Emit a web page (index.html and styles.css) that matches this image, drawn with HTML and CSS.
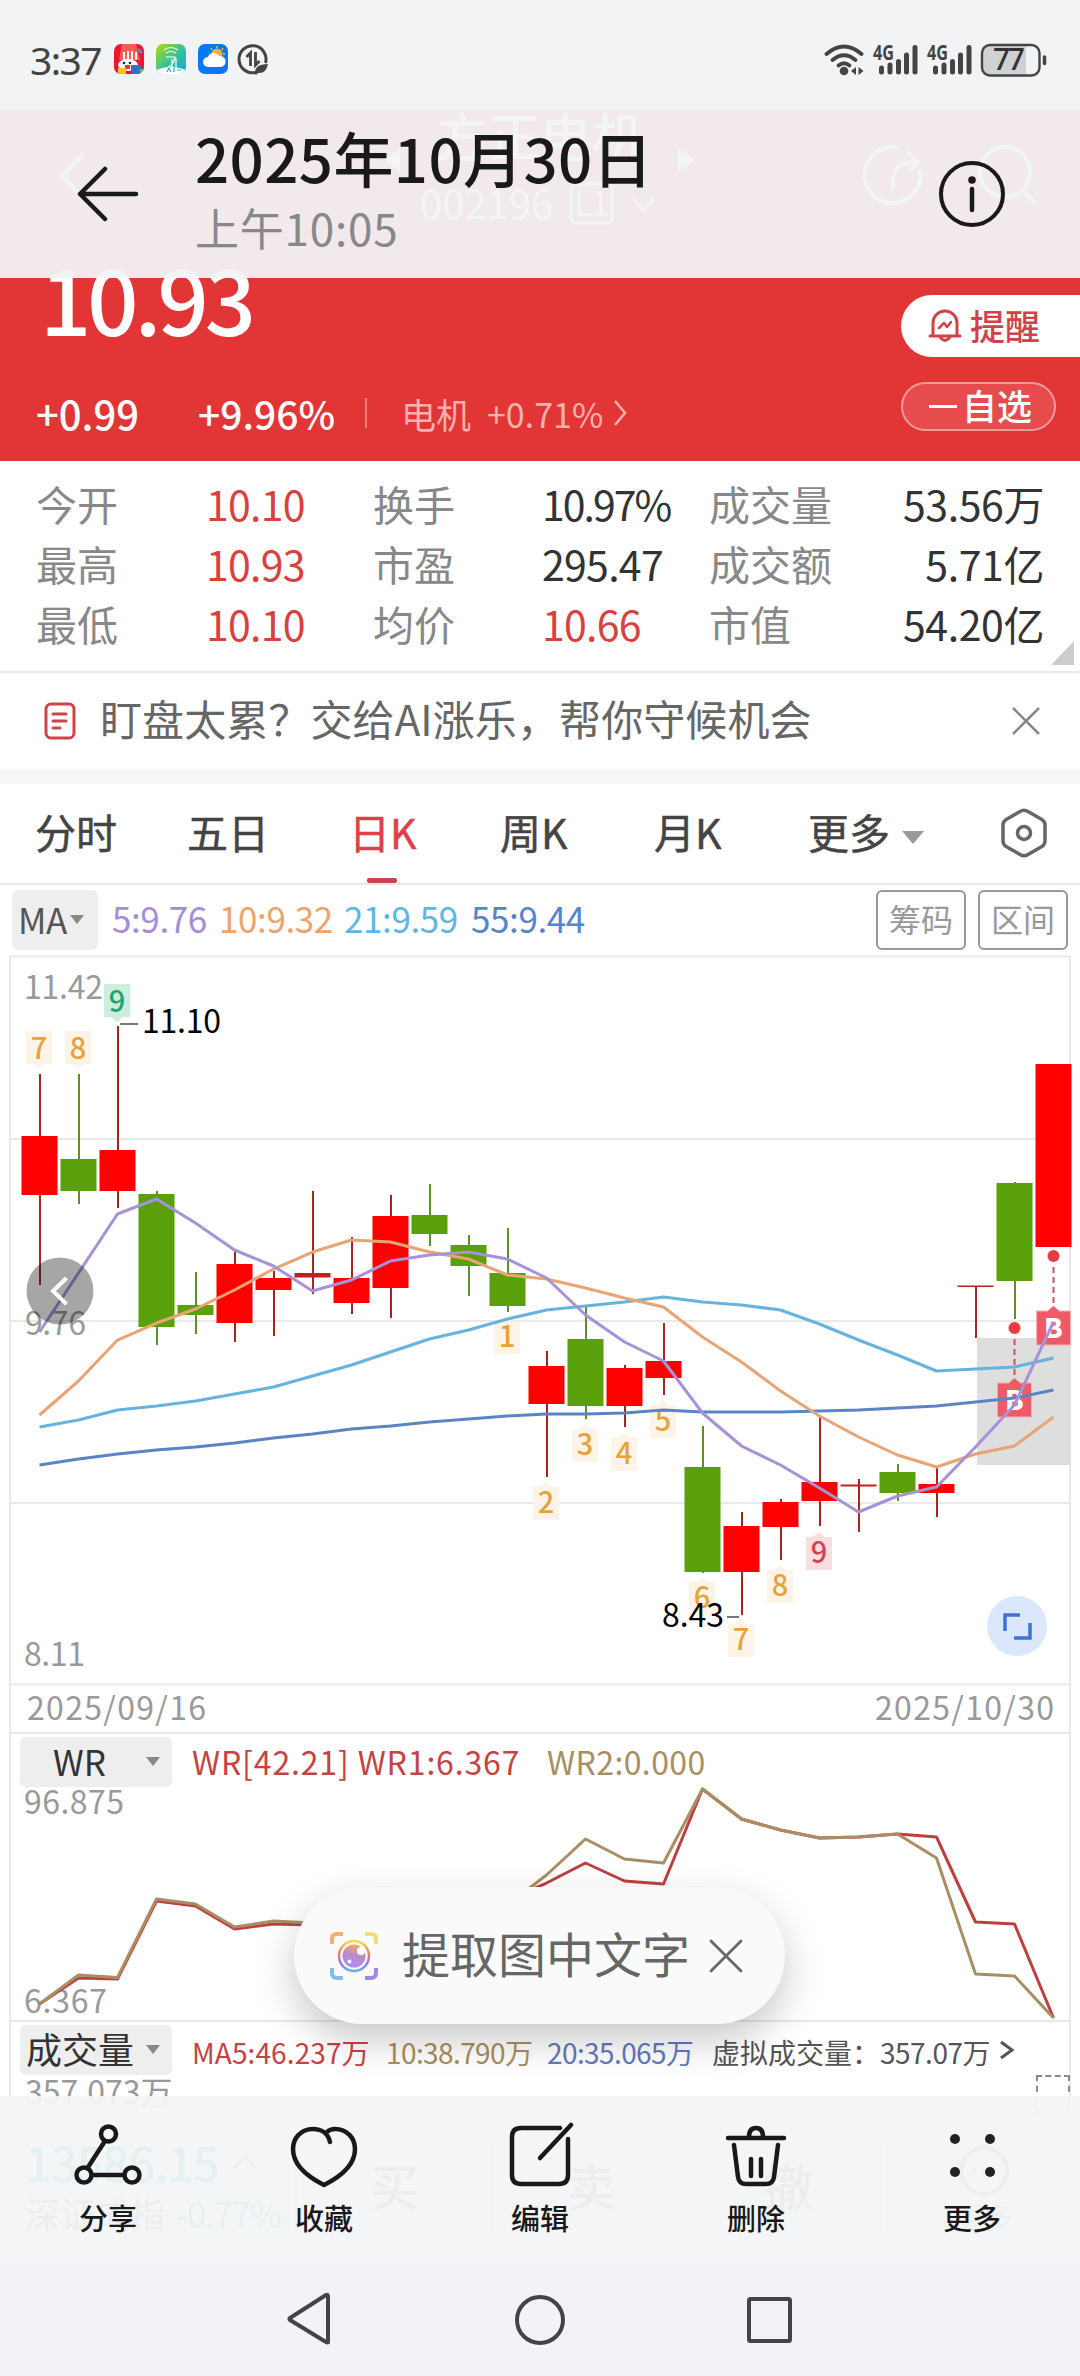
FILE: index.html
```html
<!DOCTYPE html>
<html lang="zh-CN">
<head>
<meta charset="utf-8">
<title>方正电机 002196</title>
<link rel="stylesheet" href="styles.css">
</head>
<body>
<div class="phone">
  <main class="app">
    <section class="hero">
      <div class="hero-nav">
        <svg class="hero-nav-art" width="1080" height="168" viewBox="0 110 1080 168" fill="none" stroke="#fff" stroke-width="5">
          <path d="M84 153 62 176 84 199"/>
          <path d="M400 148v24l-15-12zM678 148v24l18-12z" fill="#fff" stroke="none"/>
          <rect x="571" y="184" width="41" height="39" rx="5" stroke-width="3"/>
          <path d="m633 199 10 11 11-11" stroke-width="3"/>
          <path d="M899 148a28 28 0 1 0 21 22M893 190v-12q2-16 24-16M907 152l11 10-8 9" stroke-width="4"/>
          <circle cx="1005" cy="172" r="25" stroke-width="4"/><path d="m1023 190 12 14" stroke-width="4"/>
        </svg>
        <div class="stock-name">方正电机</div>
        <div class="stock-code"><span>002196</span><b>L1</b></div>
      </div>
      <div class="price">10.93</div>
      <div class="changes">
        <span class="chg">+0.99</span><span class="pct">+9.96%</span><i class="bar"></i>
        <span class="sector">电机</span><span class="sector-pct">+0.71%</span>
        <svg width="16" height="28" viewBox="0 0 16 28" fill="none" stroke="#f9b0ae" stroke-width="2.5"><path d="m2 2 10 12L2 26"/></svg>
      </div>
      <div class="hero-actions">
        <div class="remind">
          <svg width="34" height="36" viewBox="0 0 34 36" fill="none" stroke="#d0424a" stroke-width="3" stroke-linecap="round" stroke-linejoin="round"><path d="M5 28V15a12 12 0 0 1 24 0v13M2 28h30M12 29q5 7 10 0"/><path d="m11 20 5-5 3 4 4-5" stroke-width="2.5"/></svg>
          <span>提醒</span>
        </div>
        <div class="watch"><i></i><span>自选</span></div>
      </div>
    </section>

    <section class="stats">
      <span>今开</span><b class="up">10.10</b><span>换手</span><b class="tight">10.97%</b><span>成交量</span><b class="end">53.56万</b>
      <span>最高</span><b class="up">10.93</b><span>市盈</span><b>295.47</b><span>成交额</span><b class="end">5.71亿</b>
      <span>最低</span><b class="up">10.10</b><span>均价</span><b class="up">10.66</b><span>市值</span><b class="end">54.20亿</b>
      <i class="corner"></i>
    </section>

    <section class="notice">
      <svg width="32" height="38" viewBox="0 0 32 38" fill="none" stroke="#d0424a" stroke-width="3" stroke-linecap="round"><rect x="2" y="2" width="28" height="34" rx="5"/><path d="M9 12h13M9 19h13M9 26h7"/></svg>
      <p>盯盘太累？交给AI涨乐，帮你守候机会</p>
      <svg width="28" height="28" viewBox="0 0 28 28" stroke="#888" stroke-width="2.5"><path d="m1 1 26 26M27 1 1 27"/></svg>
    </section>

    <nav class="tabs">
      <span>分时</span><span>五日</span><span class="on">日K</span><span>周K</span><span>月K</span><span>更多<i class="caret"></i></span>
      <svg width="46" height="50" viewBox="0 0 46 50" fill="none" stroke="#666" stroke-width="3.5" stroke-linejoin="round"><path d="M19 3.500Q23 1 27 3.500L40 11Q44 13 44 17V33Q44 37 40 39L27 46.500Q23 49 19 46.500L6 39Q2 37 2 33V17Q2 13 6 11Z"/><circle cx="23" cy="25" r="6.500"/></svg>
    </nav>

    <section class="ma-row">
      <div class="pick ma-pick">MA<i class="caret"></i></div>
      <span class="ma5">5:9.76</span><span class="ma10">10:9.32</span><span class="ma21">21:9.59</span><span class="ma55">55:9.44</span>
      <button>筹码</button><button>区间</button>
    </section>

    <svg class="kline" id="kline" width="1080" height="777" viewBox="0 955 1080 777"></svg>

    <section class="panel wr">
      <div class="panel-head">
        <div class="pick">WR<i class="caret"></i></div>
        <span class="red">WR[42.21] WR1:6.367</span><span class="tan">WR2:0.000</span>
      </div>
      <svg id="wr" width="1080" height="233" viewBox="0 1787 1080 233"></svg>
    </section>

    <section class="panel vol">
      <div class="panel-head">
        <div class="pick">成交量<i class="caret"></i></div>
        <span class="red v1">MA5:46.237万</span><span class="tan v2">10:38.790万</span><span class="blue v3">20:35.065万</span><span class="v4">虚拟成交量：</span><span class="v5">357.07万</span>
        <svg width="16" height="20" viewBox="0 0 16 20" fill="none" stroke="#555" stroke-width="3"><path d="m2 2 11 8-11 8"/></svg>
      </div>
      <div class="vol-body"><span>357.073万</span><i></i></div>
    </section>

    <footer class="trade">
      <div class="index">
        <div class="index-value">13586.15<svg width="26" height="16" viewBox="0 0 26 16" fill="none" stroke="#888" stroke-width="3"><path d="m2 14 11-11 11 11"/></svg></div>
        <div class="index-name">深证成指<em>-0.77%</em></div>
      </div>
      <div class="side">买</div><div class="side">卖</div><div class="side">撤</div>
      <div class="more-ghost">
        <svg width="52" height="52" viewBox="0 0 52 52" fill="none" stroke="#888" stroke-width="4"><circle cx="26" cy="26" r="23"/><path d="M14 26h4M24 26h4M34 26h4"/></svg>
        更多
      </div>
    </footer>
  </main>

  <div class="status">
    <span class="clock">3:37</span>
    <svg class="status-apps" width="156" height="32" viewBox="0 0 156 32">
      <defs>
        <linearGradient id="g1" x1="0" y1="0" x2="1" y2="1"><stop offset=".1" stop-color="#9bd32a"/><stop offset=".55" stop-color="#2dc3a0"/><stop offset="1" stop-color="#1ba7d8"/></linearGradient>
        <clipPath id="c1"><rect y="1" width="30" height="30" rx="7"/></clipPath>
        <clipPath id="c2"><rect x="42" y="1" width="30" height="30" rx="7"/></clipPath>
      </defs>
      <g clip-path="url(#c1)"><path fill="#ec1630" d="M0 1h30v30H0z"/><path fill="#ff5a52" d="M8 1h14l4 16H5z"/><path d="M10 9v8M14 8v9M18 8v9M22 9v8" stroke="#fff" stroke-width="2"/><ellipse cx="14" cy="22" rx="10" ry="6" fill="#fff"/><circle cx="10" cy="20" r="1.300" fill="#222"/><circle cx="16" cy="20" r="1.300" fill="#222"/><path fill="#e3362f" d="M11 22h5v4h-5z"/><path fill="#ffc02c" d="M4 25h8v6H4z"/><path fill="#3270c8" d="M17 22h10v9H17z"/><path fill="#5bc36d" d="M26 26h4v5h-4z"/><path d="m24 6 4 4" stroke="#5d7fd8" stroke-width="3"/></g>
      <g clip-path="url(#c2)"><path fill="url(#g1)" d="M42 1h30v30H42z"/><ellipse cx="57" cy="30" rx="16" ry="6" fill="#fff"/><path d="M50 7q7-5 14 0M52 10q5-3 10 0M52 14h9q-1 8-7 10M58 16v8M62 15v9" fill="none" stroke="#fff" stroke-width="1.200"/><path d="m53 29 2-4 2 4M60 25v4M63 27h4" fill="none" stroke="#25a9c6" stroke-width="1.200"/></g>
      <rect x="84" y="1" width="30" height="30" rx="7" fill="#0878f3"/><circle cx="103" cy="11" r="5.500" fill="#ffb21e"/><path d="M103 3v2M97 5l1 2M109 5l-1 2M111 11h-2M109 17l-1-1" stroke="#ffb21e" stroke-width="1.500"/><path fill="#fff" d="M94 24a5 5 0 0 1 0-10 6 6 0 0 1 11-1 5.500 5.500 0 0 1 2 11z"/>
      <g fill="none" stroke="#444" stroke-width="3"><path d="M151.500 20A13.500 13.500 0 1 0 141 29.500"/><path d="M136.500 23V10l-4 4M141.500 9v13l4-4" stroke-width="2.800"/></g><path d="M141 31q-1-10 13-10-2 10-10 9l-2 2z" fill="#444"/>
    </svg>
    <svg class="status-net" width="240" height="36" viewBox="820 40 240 36" fill="none" stroke="#444" stroke-linecap="round">
      <g stroke-width="3.800"><path d="M825.500 53Q843 38 860.500 53"/><path d="M831.500 59Q843 49.500 854.500 59"/><path d="M837.500 64.500Q843 60 848.500 64.500"/></g>
      <circle cx="843" cy="70" r="4.300" fill="#444" stroke="none"/><path fill="#444" stroke="none" d="M855 66v8l-5-4zM857.500 66v8l5-4z"/>
      <g stroke-width="5"><path d="M880.500 67v4M889 64v7M897.500 60.500V71M905.500 54v17M914 46.500V71"/><path d="M934.500 67v4M943 64v7M951.500 60.500V71M959.500 54v17M968 46.500V71"/></g>
      <g class="g4"><text x="872" y="58.500" textLength="21" lengthAdjust="spacingAndGlyphs">4G</text><text x="926" y="58.500" textLength="21" lengthAdjust="spacingAndGlyphs">4G</text></g>
      <path d="M990 45h35v29h-35q-8 0-8-8V53q0-8 8-8z" fill="#cfd1d3" stroke="none"/>
      <rect x="981" y="44" width="57.500" height="30.500" rx="8" stroke-width="2.400"/><path d="M1043.500 56v6.500" stroke-width="3.500"/>
      <text class="batt" x="992" y="69" textLength="32">77</text>
    </svg>
  </div>

  <header class="topbar">
    <svg width="62" height="56" viewBox="0 0 62 56" fill="none" stroke="#191919" stroke-width="4.500" stroke-linecap="round" stroke-linejoin="round"><path d="M59 28H3M28 3 3 28l25 25"/></svg>
    <div class="when"><h1>2025年10月30日</h1><p>上午10:05</p></div>
    <svg width="68" height="68" viewBox="0 0 68 68" fill="none" stroke="#191919" stroke-width="4"><circle cx="34" cy="34" r="31"/><path d="M34 29v21" stroke-width="4.500" stroke-linecap="round"/><circle cx="34" cy="20" r="3.800" fill="#191919" stroke="none"/></svg>
  </header>

  <div class="extract">
    <svg width="50" height="50" viewBox="0 0 50 50" fill="none">
      <defs>
        <linearGradient id="lens" x1="0" y1="0" x2="0" y2="1"><stop offset="0" stop-color="#f9dc4e"/><stop offset=".4" stop-color="#ee7f66"/><stop offset=".75" stop-color="#a078ea"/><stop offset="1" stop-color="#62b4ee"/></linearGradient>
        <linearGradient id="ball" x1=".7" y1="0" x2=".4" y2="1"><stop offset="0" stop-color="#f6b055"/><stop offset=".5" stop-color="#b88ad0"/><stop offset="1" stop-color="#b08cf2"/></linearGradient>
      </defs>
      <g stroke-width="4"><path d="M3 13V8q0-5 5-5h6" stroke="#f3b071"/><path d="M36 3h6q5 0 5 5v5" stroke="#f5d978"/><path d="M3 37v5q0 5 5 5h6" stroke="#84bdec"/><path d="M36 47h6q5 0 5-5v-5" stroke="#a287e4"/></g>
      <circle cx="25" cy="25" r="15" stroke="url(#lens)" stroke-width="2.500"/><circle cx="25" cy="25" r="11.500" fill="url(#ball)"/><circle cx="32" cy="20" r="4" fill="#fff"/><circle cx="20.500" cy="30.500" r="2" fill="#fff"/>
    </svg>
    <span>提取图中文字</span>
    <svg width="34" height="34" viewBox="0 0 34 34" stroke="#666" stroke-width="2.800" stroke-linecap="round"><path d="m2 2 30 30M32 2 2 32"/></svg>
  </div>

  <div class="toolbar">
    <div class="tool"><svg viewBox="0 0 72 72"><circle cx="36.500" cy="14" r="7.500"/><circle cx="12" cy="55" r="7.500"/><circle cx="60" cy="55" r="7.500"/><path d="M33 21 15.500 48M20 55h32"/></svg>分享</div>
    <div class="tool"><svg viewBox="0 0 72 72"><path d="M42 22C40 13 33 9 25 9 13 9 5 18 5 29c0 16 15 28 31 36C52 57 67 45 67 29c0-11-8-20-20-20-3 0-6 1-8 3"/></svg>收藏</div>
    <div class="tool"><svg viewBox="0 0 72 72"><path d="M56 8H17Q8 8 8 17v38q0 9 9 9h38q9 0 9-9V19M36 38 67 5"/></svg>编辑</div>
    <div class="tool"><svg viewBox="0 0 72 72"><path d="M8 18h56M29 17q0-9 7-9t7 9M14 25l4 32q1 7 8 7h20q7 0 8-7l4-32M31 39v17M41 39v17"/></svg>删除</div>
    <div class="tool"><svg class="dots" viewBox="0 0 72 72"><circle cx="19" cy="19" r="5"/><circle cx="54" cy="19" r="5"/><circle cx="19" cy="52" r="5"/><circle cx="54" cy="52" r="5"/></svg>更多</div>
  </div>

  <div class="sysnav">
    <svg width="510" height="56" viewBox="285 2292 510 56" fill="none" stroke="#444" stroke-width="4" stroke-linejoin="round"><path d="M328 2297v45q0 1-2 0l-36-22q-1-1 0-2l36-23q2-1 2 2z"/><circle cx="540" cy="2320" r="23"/><rect x="749" y="2299" width="41" height="42" rx="1.500"/></svg>
  </div>
</div>
<script src="charts.js"></script>
</body>
</html>
```
FILE: styles.css
```css
* { box-sizing: border-box; margin: 0; padding: 0; }
body { background: #fff; font-family: "Noto Sans CJK SC", "Noto Sans", sans-serif; color: #333; }
svg { display: block; flex: none; }
i, em { font-style: normal; }
.phone { position: relative; width: 1080px; height: 2376px; overflow: hidden; }
.app { height: 2264px; overflow: hidden; background: #fff; }

.hero { position: relative; height: 461px; background: #e23536; color: #fff; padding-top: 110px; }
.hero-nav { position: relative; height: 150px; text-align: center; }
.hero-nav-art { position: absolute; left: 0; top: 0; }
.stock-name { font-size: 52px; line-height: 60px; font-weight: 500; margin-top: -5px; }
.stock-code { display: flex; padding-left: 420px; gap: 21px; font-size: 40px; line-height: 60px; margin-top: 7px; }
.stock-code b { font-weight: 400; font-size: 34px; letter-spacing: -2px; }
.price { height: 110px; padding-left: 40px; font-size: 90px; line-height: 110px; font-weight: 500; letter-spacing: -4px; margin-top: -18px; }
.hero-nav { margin-bottom: 5px; height: 145px; padding-top: .1px; }
.changes { display: flex; align-items: center; height: 60px; margin-top: 31px; padding-left: 36px; font-weight: 500; }
.chg { width: 162px; font-size: 40px; }
.pct { width: 167px; font-size: 39px; }
.bar { width: 2px; height: 30px; background: #f07f7e; margin-right: 34px; }
.sector { color: #f9b0ae; font-size: 35px; font-weight: 400; width: 86px; }
.sector-pct { color: #f9b0ae; font-size: 34px; font-weight: 400; width: 126px; }
.hero-actions { position: absolute; left: 901px; top: 295px; width: 179px; }
.remind { display: flex; align-items: center; gap: 8px; height: 62px; padding-left: 27px; background: #fff; border-radius: 31px 0 0 31px; color: #d0424a; font-size: 35px; font-weight: 500; }
.remind span { padding-bottom: 4px; }
.watch { display: flex; align-items: center; gap: 5px; width: 155px; height: 49px; margin-top: 25px; padding-left: 26px; border: 2px solid #f29b9a; border-radius: 25px; background: #e64c4d; font-size: 35px; font-weight: 500; line-height: 40px; }
.watch span { padding-bottom: 4px; }
.watch i { width: 28px; height: 3px; background: #fff; }

.stats { position: relative; display: grid; grid-template-columns: 170px 167px 169px 167px 166px 169px; grid-template-rows: repeat(3, 60px); align-content: start; padding: 12px 0 0 36px; height: 210px; font-size: 41px; line-height: 60px; color: #888; }
.stats b { font-weight: 400; color: #333; white-space: nowrap; letter-spacing: -.7px; }
.stats b.up { color: #d8413e; }
.stats b.tight { letter-spacing: -2px; }
.stats .end { text-align: right; letter-spacing: -.4px; }
.corner { position: absolute; right: 6px; top: 180px; border-left: 23px solid transparent; border-bottom: 24px solid #ccc; }

.notice { display: flex; align-items: center; height: 113px; padding: 0 40px 15px 44px; border-top: 2px solid #ebebeb; background: linear-gradient(#fff 96px, #f7f7f7 96px); }
.notice p { flex: 1; padding: 0 0 6px 24px; font-size: 42px; line-height: 60px; color: #666; letter-spacing: .1px; white-space: nowrap; }

.tabs { display: grid; grid-template-columns: 152px 162px 151px 154px 154px 193px 46px; align-items: center; height: 101px; padding-left: 35px; padding-bottom: 2px; border-bottom: 2px solid #e8e8e8; font-size: 41px; line-height: 60px; color: #444; -webkit-text-stroke: .5px; }
.tabs span { position: relative; top: -2px; }
.tabs .on { color: #de3f48; }
.tabs .on::after { content: ""; position: absolute; left: 18px; top: 77px; width: 30px; height: 5px; border-radius: 2px; background: #c4474f; }
.caret { display: inline-block; border: 7px solid transparent; border-top: 9px solid #888; border-bottom: 0; vertical-align: middle; }
.tabs .caret { border-width: 13px 11px 0; border-top-color: #999; margin-left: 12px; }

.ma-row { display: flex; align-items: center; height: 70px; padding: 0 12px; font-size: 35px; letter-spacing: -.4px; white-space: nowrap; }
.ma-row > span { padding-bottom: 5px; }
.pick { display: flex; align-items: center; background: #eee; border-radius: 6px; color: #333; }
.ma-pick { width: 86px; height: 60px; padding: 0 0 4px 6px; margin-right: 14px; color: #555; letter-spacing: -.5px; }
.ma-pick .caret { margin: 4px 0 0 3px; }
.ma5 { color: #a68cd8; width: 107px; }
.ma10 { color: #eba46a; width: 125px; }
.ma21 { color: #5fb6e3; width: 127px; }
.ma55 { color: #5585cc; flex: 1; }
.ma-row button { width: 90px; height: 60px; margin-left: 12px; padding-bottom: 4px; border: 2px solid #999; border-radius: 6px; background: #fff; color: #999; font: 32px "Noto Sans CJK SC", sans-serif; }

.kline text, .wr text { fill: #999; font-size: 32px; }
.kline .ink { fill: #000; }
.kline .tag { font-size: 29px; text-anchor: middle; font-weight: 500; }
.panel { padding-top: 2px; background: linear-gradient(#e8e8e8, #e8e8e8) 10px 0 / 1061px 2px no-repeat, linear-gradient(#e9e9e9, #e9e9e9) 9px 0 / 2px 100% no-repeat, linear-gradient(#e9e9e9, #e9e9e9) 1069px 0 / 2px 100% no-repeat; }
.wr { height: 288px; }
.panel-head { display: flex; align-items: center; height: 53px; padding: 3px 0 0 20px; font-size: 32px; white-space: nowrap; }
.panel-head > span { padding-bottom: 2px; }
.panel-head .pick { width: 152px; height: 50px; margin-right: 20px; padding: 0 12px 4px 33px; font-size: 35px; justify-content: space-between; }
.pick .caret { margin-top: 3px; }
.red { color: #c54343; }
.tan { color: #a88e60; }
.blue { color: #6379bb; }
.wr .red { width: 355px; letter-spacing: .85px; }
.wr .tan { letter-spacing: .4px; }
.vol { height: 93px; }
.vol .panel-head { font-size: 28px; color: #555; }
.vol .panel-head > span { padding: 3px 0 0; }
.vol .panel-head .pick { padding-left: 6px; font-size: 36px; }
.v1 { width: 194px; letter-spacing: .1px; }
.v2, .v3 { width: 161px; letter-spacing: -.6px; }
.v3 { width: 165px; }
.v4 { width: 168px; }
.v5 { width: 119px; letter-spacing: -.5px; }
.vol-body { position: relative; height: 38px; padding-left: 25px; overflow: hidden; font-size: 32px; line-height: 30px; color: #999; }
.vol-body i { position: absolute; left: 1036px; top: 0; width: 34px; height: 60px; border: 2px dashed #888; }

.trade { display: flex; height: 151px; border-top: 1px solid #ddd; background: #fff; align-items: center; }
.index { width: 295px; padding: 0 0 12px 25px; }
.index-value { display: flex; align-items: center; gap: 13px; font-size: 47px; line-height: 60px; color: #12b886; font-weight: 500; letter-spacing: -1px; }
.index-name { display: flex; gap: 11px; font-size: 35px; line-height: 42px; color: #777; }
.index-name em { color: #12b886; letter-spacing: -1.3px; }
.side { width: 197px; height: 86px; line-height: 76px; text-align: center; font-size: 50px; color: #777; border-left: 2px solid #ddd; font-weight: 500; }
.more-ghost { flex: 1; display: flex; flex-direction: column; align-items: center; border-left: 2px solid #ddd; font-size: 29px; line-height: 38px; color: #999; padding-top: 2px; }

.status { position: absolute; left: 0; top: 0; width: 1080px; height: 110px; background: #f1f3f5; display: flex; align-items: center; padding: 8px 19px 0 30px; }
.clock { width: 84px; font-size: 39px; color: #444; letter-spacing: -1.6px; font-family: "Noto Sans", "Noto Sans CJK SC", sans-serif; }
.status-net { margin-left: auto; }
.g4 text { font: bold 21px "Noto Sans", sans-serif; fill: #444; stroke: none; }
.batt { font: 500 30px "Noto Sans", sans-serif; fill: #333; stroke: none; }

.topbar { position: absolute; left: 0; top: 110px; width: 1080px; height: 168px; background: rgba(241, 243, 245, .947); display: flex; align-items: center; padding: 0 74px 0 77px; }
.when { flex: 1; padding-left: 56px; color: #191919; }
.when h1 { font-size: 60px; line-height: 74px; font-weight: 500; letter-spacing: .4px; margin-top: -8px; }
.when p { font-size: 44px; line-height: 66px; color: #888; letter-spacing: .8px; }

.extract { position: absolute; left: 294px; top: 1887px; width: 491px; height: 137px; border-radius: 69px; background: #fafafa; box-shadow: 0 16px 40px rgba(0, 0, 0, .22); display: flex; align-items: center; padding-left: 35px; color: #666; }
.extract span { font-size: 48px; width: 306px; padding: 0 0 7px 23px; margin-right: 24px; white-space: nowrap; line-height: 60px; }

.toolbar { position: absolute; left: 0; top: 2096px; width: 1080px; height: 168px; background: rgba(242, 244, 246, .94); display: flex; }
.tool { width: 216px; padding-top: 24px; text-align: center; font-size: 29px; line-height: 36px; font-weight: 500; color: #191919; }
.tool svg { width: 72px; height: 72px; margin: 0 auto 7px; fill: none; stroke: #191919; stroke-width: 4.5; stroke-linecap: round; stroke-linejoin: round; }
.tool svg.dots { fill: #222; stroke: none; }
.sysnav { height: 112px; background: #f1f3f7; padding: 28px 0 0 285px; }
```
FILE: charts.js
```js
const NS = 'http://www.w3.org/2000/svg';
const X0 = 39.5, STEP = 39;
const cx = i => X0 + STEP * i;

function add(parent, name, attrs, text) {
  const el = document.createElementNS(NS, name);
  for (const key in attrs) el.setAttribute(key, attrs[key]);
  if (text !== undefined) el.textContent = text;
  parent.appendChild(el);
  return el;
}
function line(svg, ys, color, width, from = 0) {
  const points = ys.map((y, i) => cx(i + from) + ',' + y).join(' ');
  add(svg, 'polyline', { points, fill: 'none', stroke: color, 'stroke-width': width, 'stroke-linejoin': 'round' });
}
function label(svg, x, y, width, text, cls = '') {
  add(svg, 'text', { x, y, textLength: width, class: cls }, text);
}

const k = document.getElementById('kline');
// frame and grid
add(k, 'path', { d: 'M10 956.500H1071M10 1139H1071M10 1321H1071M10 1503H1071M10 1684.500H1071M10 956V1732M1070 956V1732', stroke: '#e9e9e9', 'stroke-width': 2, fill: 'none' });
add(k, 'rect', { x: 977, y: 1338, width: 94, height: 127, fill: '#dedede' });

label(k, 24, 999, 79, '11.42');
label(k, 25, 1335, 61, '9.76');
label(k, 24, 1666, 61, '8.11');
label(k, 27, 1720, 179, '2025/09/16');
label(k, 875, 1720, 179, '2025/10/30');

// numbered tags: index, top, value, pointer side, fill, text colour
[[0, 1031, 7, 'd'], [1, 1031, 8, 'd'], [2, 984, 9, 'd', '#cdeedf', '#1fa46b'],
 [12, 1321, 1, 'u'], [13, 1487, 2, 'u'], [14, 1429, 3, 'u'], [15, 1438, 4, 'u'], [16, 1405, 5, 'u'],
 [17, 1582, 6, 'u'], [18, 1624, 7, 'u'], [19, 1570, 8, 'u'], [20, 1537, 9, 'u', '#fbdcdf', '#d2454f']
].forEach(([i, y, n, side, fill = '#fdf3e7', ink = '#e5a33c']) => {
  const x = cx(i) - .5;
  add(k, 'path', { d: `M${x - 13} ${y}h26v33h-26z` + (side === 'd' ? `M${x - 6} ${y + 33}h12l-6 5z` : `M${x - 6} ${y}l6-5 6 5z`), fill });
  add(k, 'text', { x, y: y + (side === 'd' ? 28 : 26), class: 'tag', style: `fill:${ink}` }, n);
});

// candles: colour, high, body top, body bottom, low
[['r', 1074, 1136, 1195, 1285], ['g', 1074, 1159, 1191, 1204], ['r', 1026, 1150, 1191, 1208],
 ['g', 1191, 1194, 1327, 1345], ['g', 1272, 1305, 1315, 1334], ['r', 1250, 1264, 1323, 1342],
 ['r', 1271, 1278, 1290, 1336], ['r', 1191, 1273, 1277.500, 1294], ['r', 1237, 1278, 1303, 1314],
 ['r', 1195, 1216, 1288, 1318], ['g', 1184, 1215, 1234, 1246], ['g', 1235, 1245, 1266, 1296],
 ['g', 1228, 1273, 1306, 1312], ['r', 1351, 1366, 1404, 1477], ['g', 1307, 1339, 1406, 1419],
 ['r', 1365, 1368, 1406, 1427], ['r', 1323, 1361, 1378, 1395], ['g', 1426, 1467, 1572, 1573],
 ['r', 1512, 1526, 1572, 1615], ['r', 1499, 1502, 1527, 1560], ['r', 1417, 1482, 1501, 1526],
 ['r', 1479, 1484.500, 1486.500, 1532], ['g', 1464, 1472, 1493, 1501], ['r', 1467, 1484, 1493, 1517],
 ['r', 1286, 1285.500, 1287, 1338], ['g', 1182, 1183, 1281, 1319], ['r', 1064, 1064, 1247, 1247]
].forEach(([c, high, top, bottom, low], i) => {
  add(k, 'path', { d: `M${cx(i) + .5} ${high}V${low}`, stroke: c === 'r' ? '#a62423' : '#5d9029', 'stroke-width': 2 });
  const thin = bottom - top < 5;
  add(k, 'rect', { x: cx(i) - 18, y: top, width: 36, height: bottom - top, fill: c === 'r' ? (thin ? '#c02020' : '#f00') : '#5aa00b' });
});

add(k, 'path', { d: 'M120 1024h18M727 1617h12', stroke: '#777', 'stroke-width': 2 });
label(k, 142, 1033, 79, '11.10', 'ink');
label(k, 662, 1627, 62, '8.43', 'ink');

// buy markers
[[25, 1328, 1383], [26, 1256, 1311]].forEach(([i, dot, y]) => {
  const x = cx(i);
  add(k, 'circle', { cx: x, cy: dot, r: 6, fill: '#ea3a43' });
  add(k, 'path', { d: `M${x} ${dot + 11}V${y - 8}`, stroke: '#c95560', 'stroke-width': 2, 'stroke-dasharray': '6 4' });
  add(k, 'path', { d: `M${x - 17} ${y}h11l6-5 6 5h11v34h-34z`, fill: '#ec5b66', stroke: '#f7aeb3', 'stroke-width': 1 });
  add(k, 'text', { x, y: y + 27, class: 'tag', style: 'fill:#fff;font-weight:900;font-size:27px' }, 'B');
});

line(k, [1465,1459,1454,1450,1447,1443,1438,1434,1429,1426,1422,1419,1416,1414,1414,1413,1410,1412,1412,1412,1411,1410,1408,1406,1402,1398,1390], '#5b84c4', 3);
line(k, [1427,1420,1410,1406,1401,1394,1387,1376,1365,1352,1339,1330,1319,1310,1306,1302,1297,1302,1305,1310,1324,1340,1355,1371,1369,1367,1358], '#66b4de', 3);
line(k, [1415,1381,1340,1323,1309,1290,1269,1252,1240,1242,1252,1259,1275,1279,1288,1298,1307,1337,1362,1391,1416,1437,1455,1467,1454,1446,1417], '#e8a474', 3);
line(k, [1332,1273,1214,1199,1223,1250,1266,1291,1280,1261,1255,1252,1259,1278,1315,1342,1361,1413,1446,1465,1488,1512,1496,1487,1447,1405,1322], '#a692d6', 3);

// scroll-back and full-screen buttons
add(k, 'circle', { cx: 60, cy: 1291, r: 33.500, fill: '#000', 'fill-opacity': .35 });
add(k, 'path', { d: 'M66.500 1278 53 1291l13.500 13', stroke: '#fff', 'stroke-width': 4, fill: 'none' });
add(k, 'circle', { cx: 1017, cy: 1626, r: 30, fill: '#dbe7fc' });
add(k, 'path', { d: 'M1005 1631V1615H1020M1014 1638H1030V1623', stroke: '#3f74d4', 'stroke-width': 3.500, fill: 'none' });

const w = document.getElementById('wr');
label(w, 24, 1814, 100, '96.875');
label(w, 24, 2013, 83, '6.367');
line(w, [2004,1978,1979,1901,1906,1929,1924,1925,1930,1935,1925,1910,1900,1883,1863,1881,1884,1789,1819,1830,1838,1837,1834,1837,1922,1924,2018], '#bd4040', 3);
line(w, [2004,1975,1977.500,1899,1904,1927,1921,1923,1928,1932,1920,1915,1905,1875,1839,1859,1863,1789,1819,1830,1838,1837,1834,1858,1974,1976,2018], '#a88e62', 3);
```
